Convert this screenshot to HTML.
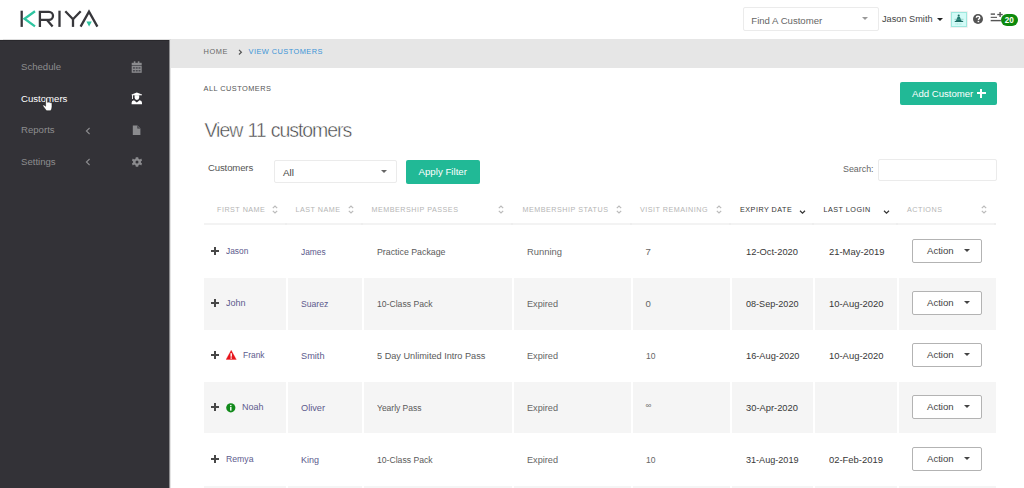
<!DOCTYPE html>
<html><head><meta charset="utf-8">
<style>
*{margin:0;padding:0;box-sizing:border-box}
html,body{width:1024px;height:488px;overflow:hidden;background:#fff;font-family:"Liberation Sans",sans-serif}
.a{position:absolute;white-space:nowrap;line-height:1}
#hdr{position:absolute;left:0;top:0;width:1024px;height:39px;background:#fff;box-shadow:0 0.5px 1px #ddd}
#side{position:absolute;left:0;top:40px;width:169px;height:448px;background:#333237;border-top:1px solid #29282c}
#bc{position:absolute;left:171px;top:39px;width:853px;height:29px;background:#e6e6e6}
.si{font-size:9.6px;color:#8d8d8f}
.cap{text-transform:uppercase}
.btn{position:absolute;background:#21b996;border-radius:2px;color:#fff}
.box{position:absolute;border:1px solid #ebebeb;border-radius:2px;background:#fff}
.th{font-size:7.2px;letter-spacing:0.5px;color:#b5b5b5}
.td{font-size:9.6px;color:#5a5a5a}
.sx{transform:scaleX(0.92);transform-origin:0 0}
.sp{transform:scaleX(0.93);transform-origin:0 0}
.sd{transform:scaleX(0.97);transform-origin:0 0}
.nm{color:#5d5b8d}
.row{position:absolute;left:204px;width:792px}
.g{background:#f5f5f5}
.sep{position:absolute;top:0;bottom:0;width:2px;background:#fff}
.plus{position:absolute;width:8px;height:8px}
.plus:before{content:"";position:absolute;left:0;top:3.1px;width:8px;height:1.8px;background:#484848}
.plus:after{content:"";position:absolute;left:3.1px;top:0;width:1.8px;height:8px;background:#484848}
.act{position:absolute;left:912px;width:70px;height:24px;border:1px solid #b3b3b3;border-radius:2px;background:#fff}
.caret{position:absolute;width:0;height:0;border-left:3px solid transparent;border-right:3px solid transparent;border-top:3px solid #555}
</style></head><body>
<div id="hdr"></div>
<!-- logo -->
<svg class="a" style="left:0;top:0" width="110" height="36" viewBox="0 0 110 36">
  <g fill="none" stroke-width="2.3" stroke-linejoin="miter">
    <line x1="21.7" y1="10.7" x2="21.7" y2="26.9" stroke="#37373b"/>
    <polyline points="35,11.2 24.5,18.8 35,26.4" stroke="#2ec4a0"/>
    <path d="M39.9,26.9 V11.85 H49 A4,4 0 0 1 49,19.85 H39.9 M46.8,19.85 L52.6,26.4" stroke="#37373b"/>
    <line x1="59.5" y1="10.7" x2="59.5" y2="26.9" stroke="#37373b"/>
    <polyline points="65.3,11.2 73,19.2 80.7,11.2" stroke="#37373b"/>
    <line x1="73" y1="19" x2="73" y2="26.9" stroke="#37373b"/>
    <polyline points="80.6,26.6 89,11.6 97.4,26.6" stroke="#37373b"/>
  </g>
  <polygon points="86.4,21.6 91.8,21.6 89.1,26.6" fill="#2ec4a0"/>
</svg>
<!-- find customer -->
<div class="box" style="left:743px;top:7px;width:136px;height:24px"></div>
<div class="a" style="left:751.3px;top:15.7px;font-size:9.6px;color:#666">Find A Customer</div>
<div class="caret" style="left:862px;top:17px;border-top-color:#999"></div>
<div class="a" style="left:882px;top:15.2px;font-size:9.2px;color:#444">Jason Smith</div>
<div class="caret" style="left:937px;top:18px;border-left-width:3px;border-right-width:3px;border-top:3.5px solid #222"></div>
<!-- avatar -->
<div class="a" style="left:950px;top:10.8px;width:17.6px;height:16.8px;background:#ededed;border-radius:1px;opacity:0.8"></div>
<div class="a" style="left:951.3px;top:11.8px;width:15.5px;height:14.8px;background:#d2fbf7;border:1px solid #9ee8de"></div>
<svg class="a" style="left:950px;top:11px" width="18" height="16" viewBox="950 11 18 16">
  <circle cx="958.7" cy="15.6" r="1.05" fill="#1f6f66"/>
  <path d="M957.6,16.8 H959.8 L961.6,21.2 H955.8z" fill="#1f7b70"/>
  <path d="M954.6,21 Q958.9,20.2 963.3,21 L963,22.1 H954.9z" fill="#1d6a62"/>
  <line x1="954.5" y1="19.3" x2="963.5" y2="19.3" stroke="#5aa79c" stroke-width="0.5"/>
  <line x1="955.5" y1="24" x2="962" y2="24" stroke="#8ccfc6" stroke-width="0.6" stroke-dasharray="1 0.6"/>
</svg>
<!-- question -->
<svg class="a" style="left:973px;top:14px" width="10" height="10" viewBox="0 0 10 10">
  <circle cx="5" cy="5" r="5" fill="#545454"/>
  <path d="M3.3,3.8 Q3.3,2.2 5,2.2 Q6.8,2.2 6.8,3.7 Q6.8,4.6 5.6,5.1 L5.5,6" stroke="#fff" stroke-width="1.4" fill="none"/>
  <rect x="4.6" y="6.8" width="1.6" height="1.4" fill="#fff"/>
</svg>
<!-- list icon -->
<svg class="a" style="left:986px;top:8px" width="20" height="16" viewBox="986 8 20 16">
  <rect x="990.7" y="13.4" width="4.3" height="1.4" fill="#555"/>
  <rect x="990.7" y="16.8" width="6.3" height="1.1" fill="#555"/>
  <rect x="990.7" y="19.9" width="10.2" height="1.4" fill="#555"/>
  <rect x="999.4" y="12" width="1.4" height="5" fill="#555"/>
  <rect x="997.3" y="13.9" width="5.4" height="1.3" fill="#555"/>
</svg>
<div class="a" style="left:1001px;top:13.9px;width:16.6px;height:12.1px;border-radius:6px;background:#0d8a0d;color:#fff;font-size:8.2px;font-weight:bold;text-align:center;line-height:13.6px">20</div>

<div id="side"></div>
<div class="a" style="left:169px;top:40px;width:1px;height:448px;background:#8e8e90"></div>
<div class="a" style="left:170px;top:40px;width:1px;height:448px;background:#e4e4e4"></div>
<div class="a si" style="left:21px;top:62.3px">Schedule</div>
<div class="a si" style="left:21px;top:93.6px;color:#fff">Customers</div>
<div class="a si" style="left:21px;top:125.1px">Reports</div>
<div class="a si" style="left:21px;top:156.6px">Settings</div>

<div id="bc"></div>
<div class="a cap" style="left:203.5px;top:48px;font-size:7.4px;letter-spacing:0.6px;color:#666">Home</div>
<div class="a cap" style="left:248.5px;top:48px;font-size:7.4px;letter-spacing:0.45px;color:#3b94d6">View Customers</div>
<div class="a cap" style="left:203.5px;top:85px;font-size:7.4px;letter-spacing:0.45px;color:#555">All Customers</div>

<div class="btn" style="left:900px;top:82px;width:97px;height:23px"></div>
<div class="a" style="left:912px;top:89px;font-size:9.6px;color:#fff">Add Customer</div>

<div class="a" style="left:204.5px;top:120.5px;font-size:19.5px;color:#444;letter-spacing:-1.05px;word-spacing:0.8px;-webkit-text-stroke:0.45px #fff">View 11 customers</div>

<div class="a" style="left:208px;top:162.5px;font-size:9.6px;letter-spacing:-0.15px;color:#555">Customers</div>
<div class="box" style="left:274px;top:160px;width:123px;height:23px"></div>
<div class="a" style="left:283px;top:168px;font-size:9.8px;color:#444">All</div>
<div class="caret" style="left:381px;top:170px;border-top-color:#666"></div>
<div class="btn" style="left:406px;top:159.7px;width:74px;height:24px"></div>
<div class="a" style="left:418.5px;top:166.8px;font-size:9.7px;color:#fff">Apply Filter</div>

<div class="a" style="left:843px;top:165px;font-size:8.9px;color:#666">Search:</div>
<div class="box" style="left:878px;top:159px;width:119px;height:22px"></div>

<!-- table header -->
<div class="a th cap" style="left:217px;top:206.2px">First name</div>
<div class="a th cap" style="left:295.5px;top:206.2px">Last name</div>
<div class="a th cap" style="left:371.5px;top:206.2px">Membership passes</div>
<div class="a th cap" style="left:522.5px;top:206.2px">Membership status</div>
<div class="a th cap" style="left:640px;top:206.2px">Visit remaining</div>
<div class="a th cap" style="left:740px;top:206.2px;color:#333">Expiry date</div>
<div class="a th cap" style="left:823.5px;top:206.2px;color:#333">Last login</div>
<div class="a th cap" style="left:907px;top:206.2px">Actions</div>

<div class="row" style="top:223px;height:2px;background:#eee"></div>

<div class="row g" style="top:278px;height:52px"></div>
<div class="row g" style="top:382px;height:51px"></div>
<div class="row g" style="top:486px;height:10px"></div>


<!-- sidebar icons -->
<svg class="a" style="left:131px;top:61px" width="12" height="13" viewBox="0 0 12 13">
  <g fill="#8b8b8e">
  <rect x="0.7" y="1.8" width="10" height="2.6"/>
  <rect x="2.8" y="0.3" width="1.6" height="2"/>
  <rect x="6.8" y="0.3" width="1.6" height="2"/>
  <rect x="0.7" y="5" width="10" height="6.8"/>
  </g>
  <g fill="#4a4a50">
  <rect x="1.9" y="6.2" width="2" height="1.5"/><rect x="4.7" y="6.2" width="2" height="1.5"/><rect x="7.5" y="6.2" width="2" height="1.5"/>
  <rect x="1.9" y="9" width="2" height="1.5"/><rect x="4.7" y="9" width="2" height="1.5"/><rect x="7.5" y="9" width="2" height="1.5"/>
  </g>
</svg>
<svg class="a" style="left:131px;top:92px" width="12" height="13" viewBox="0 0 12 13">
  <g fill="#fff">
  <path d="M0.6,2.4 L5.8,0.6 L11,2.4 L5.8,3.6z"/>
  <rect x="0.7" y="2.4" width="10.2" height="0.9"/>
  <path d="M3.6,3.2 H8.2 V5.6 A2.3,2.3 0 0 1 3.6,5.6z"/>
  <rect x="1" y="3" width="0.9" height="4"/>
  <path d="M0.6,12.2 V10.8 Q0.6,8.6 3,8.3 L5.8,10.4 L8.6,8.3 Q11,8.6 11,10.8 V12.2z"/>
  </g>
</svg>
<svg class="a" style="left:132px;top:125px" width="9" height="11" viewBox="0 0 9 11">
  <path d="M0.8,0.5 H5.6 L8.4,3.3 V10.1 H0.8z" fill="#8b8b8e"/>
  <path d="M5.6,0.5 V3.3 H8.4" fill="#55555a" stroke="#333237" stroke-width="0.5"/>
</svg>
<svg class="a" style="left:131.7px;top:156.9px" width="10" height="10" viewBox="-5 -5 10 10">
  <path fill="#8b8b8e" fill-rule="evenodd" d="M-1.2,-4.8 H1.2 L1.5,-3.3 L2.9,-2.6 L4.2,-3.4 L5.1,-1.6 L3.9,-0.6 V0.6 L5.1,1.6 L4.2,3.4 L2.9,2.6 L1.5,3.3 L1.2,4.8 H-1.2 L-1.5,3.3 L-2.9,2.6 L-4.2,3.4 L-5.1,1.6 L-3.9,0.6 V-0.6 L-5.1,-1.6 L-4.2,-3.4 L-2.9,-2.6 L-1.5,-3.3z M1.5,0 A1.5,1.5 0 1 0 -1.5,0 A1.5,1.5 0 1 0 1.5,0z"/>
</svg>
<svg class="a" style="left:84.5px;top:126.5px" width="6" height="8" viewBox="0 0 6 8"><polyline points="4.6,1 1.4,4 4.6,7" fill="none" stroke="#8b8b8e" stroke-width="1.1"/></svg>
<svg class="a" style="left:84.5px;top:158px" width="6" height="8" viewBox="0 0 6 8"><polyline points="4.6,1 1.4,4 4.6,7" fill="none" stroke="#8b8b8e" stroke-width="1.1"/></svg>
<!-- cursor -->
<svg class="a" style="left:42px;top:97px" width="12" height="15" viewBox="0 0 12 15">
  <path d="M3.6,1.5 Q3.6,0.6 4.5,0.6 Q5.4,0.6 5.4,1.5 V5.2 Q6.2,4.7 7,5.2 Q7.8,4.9 8.5,5.6 Q9.4,5.3 10,6.2 V10 Q10,12.2 8.6,13.8 H4.6 Q3.6,12.6 2.4,11 L0.9,9 Q0.6,8.2 1.4,8 Q2.2,7.9 3.6,9.2z" fill="#fff" stroke="#222" stroke-width="0.6"/>
</svg>
<!-- breadcrumb chevron -->
<svg class="a" style="left:237.5px;top:49px" width="5" height="6" viewBox="0 0 5 6"><polyline points="1,0.9 3.4,3.2 1,5.5" fill="none" stroke="#555" stroke-width="1.2"/></svg>
<!-- add customer plus -->
<div class="a" style="left:977px;top:92.3px;width:8.5px;height:2.2px;background:#fff"></div>
<div class="a" style="left:980.1px;top:89.2px;width:2.2px;height:8.5px;background:#fff"></div>
<!-- rows -->
<div class="row g" style="top:278px;height:52px"></div>
<div class="a" style="left:286px;top:278px;width:1.5px;height:52px;background:#fff"></div>
<div class="a" style="left:362px;top:278px;width:1.5px;height:52px;background:#fff"></div>
<div class="a" style="left:512px;top:278px;width:1.5px;height:52px;background:#fff"></div>
<div class="a" style="left:631px;top:278px;width:1.5px;height:52px;background:#fff"></div>
<div class="a" style="left:730px;top:278px;width:1.5px;height:52px;background:#fff"></div>
<div class="a" style="left:813px;top:278px;width:1.5px;height:52px;background:#fff"></div>
<div class="a" style="left:897px;top:278px;width:1.5px;height:52px;background:#fff"></div>
<div class="row g" style="top:382px;height:51px"></div>
<div class="a" style="left:286px;top:382px;width:1.5px;height:51px;background:#fff"></div>
<div class="a" style="left:362px;top:382px;width:1.5px;height:51px;background:#fff"></div>
<div class="a" style="left:512px;top:382px;width:1.5px;height:51px;background:#fff"></div>
<div class="a" style="left:631px;top:382px;width:1.5px;height:51px;background:#fff"></div>
<div class="a" style="left:730px;top:382px;width:1.5px;height:51px;background:#fff"></div>
<div class="a" style="left:813px;top:382px;width:1.5px;height:51px;background:#fff"></div>
<div class="a" style="left:897px;top:382px;width:1.5px;height:51px;background:#fff"></div>
<div class="row g" style="top:486px;height:14px"></div>
<div class="a" style="left:286px;top:486px;width:1.5px;height:14px;background:#fff"></div>
<div class="a" style="left:362px;top:486px;width:1.5px;height:14px;background:#fff"></div>
<div class="a" style="left:512px;top:486px;width:1.5px;height:14px;background:#fff"></div>
<div class="a" style="left:631px;top:486px;width:1.5px;height:14px;background:#fff"></div>
<div class="a" style="left:730px;top:486px;width:1.5px;height:14px;background:#fff"></div>
<div class="a" style="left:813px;top:486px;width:1.5px;height:14px;background:#fff"></div>
<div class="a" style="left:897px;top:486px;width:1.5px;height:14px;background:#fff"></div>
<div class="a" style="left:204px;top:223px;width:81px;height:2px;background:#f3f3f3"></div>
<div class="a" style="left:287px;top:223px;width:74px;height:2px;background:#f3f3f3"></div>
<div class="a" style="left:363px;top:223px;width:148px;height:2px;background:#f3f3f3"></div>
<div class="a" style="left:513px;top:223px;width:117px;height:2px;background:#f3f3f3"></div>
<div class="a" style="left:632px;top:223px;width:97px;height:2px;background:#f3f3f3"></div>
<div class="a" style="left:731px;top:223px;width:81px;height:2px;background:#f3f3f3"></div>
<div class="a" style="left:814px;top:223px;width:82px;height:2px;background:#f3f3f3"></div>
<div class="a" style="left:898px;top:223px;width:96px;height:2px;background:#f3f3f3"></div>
<div class="plus" style="left:211px;top:246.8px"></div>
<div class="a td nm" style="left:226px;top:245.6px;transform:scaleX(0.870);transform-origin:0 0;">Jason</div>
<div class="a td nm" style="left:301px;top:247.1px;transform:scaleX(0.873);transform-origin:0 0;">James</div>
<div class="a td" style="left:377px;top:247.1px;transform:scaleX(0.917);transform-origin:0 0;">Practice Package</div>
<div class="a td" style="left:527px;top:247.1px;color:#666;transform:scaleX(0.979);transform-origin:0 0;">Running</div>
<div class="a td" style="left:645.5px;top:247.1px;color:#666;">7</div>
<div class="a td" style="left:746px;top:247.1px;color:#383838;transform:scaleX(0.975);transform-origin:0 0;">12-Oct-2020</div>
<div class="a td" style="left:829px;top:247.1px;color:#383838;transform:scaleX(0.981);transform-origin:0 0;">21-May-2019</div>
<div class="act" style="top:239px"></div>
<div class="a" style="left:927px;top:246.3px;font-size:9.6px;color:#444">Action</div>
<div class="caret" style="left:964px;top:249.3px;border-top-color:#444"></div>
<div class="plus" style="left:211px;top:298.8px"></div>
<div class="a td nm" style="left:226px;top:297.6px;transform:scaleX(0.941);transform-origin:0 0;">John</div>
<div class="a td nm" style="left:301px;top:299.1px;transform:scaleX(0.897);transform-origin:0 0;">Suarez</div>
<div class="a td" style="left:377px;top:299.1px;transform:scaleX(0.898);transform-origin:0 0;">10-Class Pack</div>
<div class="a td" style="left:527px;top:299.1px;color:#666;transform:scaleX(0.952);transform-origin:0 0;">Expired</div>
<div class="a td" style="left:645.5px;top:299.1px;color:#666;">0</div>
<div class="a td" style="left:746px;top:299.1px;color:#383838;transform:scaleX(0.946);transform-origin:0 0;">08-Sep-2020</div>
<div class="a td" style="left:829px;top:299.1px;color:#383838;transform:scaleX(0.982);transform-origin:0 0;">10-Aug-2020</div>
<div class="act" style="top:291px"></div>
<div class="a" style="left:927px;top:298.3px;font-size:9.6px;color:#444">Action</div>
<div class="caret" style="left:964px;top:301.3px;border-top-color:#444"></div>
<div class="plus" style="left:211px;top:350.8px"></div>
<svg class="a" style="left:226px;top:350.2px" width="11" height="10" viewBox="0 0 11 10"><path d="M5.2,0.3 L10.3,9.5 H0.1z" fill="#e8141b" stroke="#e8141b" stroke-width="0.3" stroke-linejoin="round"/><rect x="4.5" y="3.2" width="1.4" height="3.5" fill="#fff"/><rect x="4.5" y="7.4" width="1.4" height="1.3" fill="#fff"/></svg>
<div class="a td nm" style="left:243px;top:349.6px;transform:scaleX(0.879);transform-origin:0 0;">Frank</div>
<div class="a td nm" style="left:301px;top:351.1px;transform:scaleX(0.958);transform-origin:0 0;">Smith</div>
<div class="a td" style="left:377px;top:351.1px;transform:scaleX(0.954);transform-origin:0 0;">5 Day Unlimited Intro Pass</div>
<div class="a td" style="left:527px;top:351.1px;color:#666;transform:scaleX(0.952);transform-origin:0 0;">Expired</div>
<div class="a td" style="left:645.5px;top:351.1px;color:#666;transform:scaleX(0.890);transform-origin:0 0;">10</div>
<div class="a td" style="left:746px;top:351.1px;color:#383838;transform:scaleX(0.964);transform-origin:0 0;">16-Aug-2020</div>
<div class="a td" style="left:829px;top:351.1px;color:#383838;transform:scaleX(0.982);transform-origin:0 0;">10-Aug-2020</div>
<div class="act" style="top:343px"></div>
<div class="a" style="left:927px;top:350.3px;font-size:9.6px;color:#444">Action</div>
<div class="caret" style="left:964px;top:353.3px;border-top-color:#444"></div>
<div class="plus" style="left:211px;top:402.8px"></div>
<svg class="a" style="left:226px;top:403.0px" width="10" height="10" viewBox="0 0 10 10"><circle cx="4.8" cy="4.8" r="4.6" fill="#128a1b"/><rect x="4.1" y="4" width="1.4" height="3.6" fill="#fff"/><rect x="4.1" y="1.9" width="1.4" height="1.3" fill="#fff"/></svg>
<div class="a td nm" style="left:241.8px;top:401.6px;transform:scaleX(0.937);transform-origin:0 0;">Noah</div>
<div class="a td nm" style="left:301px;top:403.1px;transform:scaleX(0.957);transform-origin:0 0;">Oliver</div>
<div class="a td" style="left:377px;top:403.1px;transform:scaleX(0.884);transform-origin:0 0;">Yearly Pass</div>
<div class="a td" style="left:527px;top:403.1px;color:#666;transform:scaleX(0.952);transform-origin:0 0;">Expired</div>
<div class="a td" style="left:645.5px;top:401.6px;color:#666;font-size:8px">∞</div>
<div class="a td" style="left:746px;top:403.1px;color:#383838;transform:scaleX(0.974);transform-origin:0 0;">30-Apr-2020</div>
<div class="act" style="top:395px"></div>
<div class="a" style="left:927px;top:402.3px;font-size:9.6px;color:#444">Action</div>
<div class="caret" style="left:964px;top:405.3px;border-top-color:#444"></div>
<div class="plus" style="left:211px;top:454.8px"></div>
<div class="a td nm" style="left:226px;top:453.6px;transform:scaleX(0.904);transform-origin:0 0;">Remya</div>
<div class="a td nm" style="left:301px;top:455.1px;transform:scaleX(0.937);transform-origin:0 0;">King</div>
<div class="a td" style="left:377px;top:455.1px;transform:scaleX(0.898);transform-origin:0 0;">10-Class Pack</div>
<div class="a td" style="left:527px;top:455.1px;color:#666;transform:scaleX(0.952);transform-origin:0 0;">Expired</div>
<div class="a td" style="left:645.5px;top:455.1px;color:#666;transform:scaleX(0.890);transform-origin:0 0;">10</div>
<div class="a td" style="left:746px;top:455.1px;color:#383838;transform:scaleX(0.946);transform-origin:0 0;">31-Aug-2019</div>
<div class="a td" style="left:829px;top:455.1px;color:#383838;transform:scaleX(0.982);transform-origin:0 0;">02-Feb-2019</div>
<div class="act" style="top:447px"></div>
<div class="a" style="left:927px;top:454.3px;font-size:9.6px;color:#444">Action</div>
<div class="caret" style="left:964px;top:457.3px;border-top-color:#444"></div>
<svg class="a" style="left:271.5px;top:205px" width="6" height="9" viewBox="0 0 6 9"><polyline points="0.8,3.2 3,1 5.2,3.2" fill="none" stroke="#bbb" stroke-width="1.2"/><polyline points="0.8,5.8 3,8 5.2,5.8" fill="none" stroke="#bbb" stroke-width="1.2"/></svg>
<svg class="a" style="left:347.5px;top:205px" width="6" height="9" viewBox="0 0 6 9"><polyline points="0.8,3.2 3,1 5.2,3.2" fill="none" stroke="#bbb" stroke-width="1.2"/><polyline points="0.8,5.8 3,8 5.2,5.8" fill="none" stroke="#bbb" stroke-width="1.2"/></svg>
<svg class="a" style="left:498px;top:205px" width="6" height="9" viewBox="0 0 6 9"><polyline points="0.8,3.2 3,1 5.2,3.2" fill="none" stroke="#bbb" stroke-width="1.2"/><polyline points="0.8,5.8 3,8 5.2,5.8" fill="none" stroke="#bbb" stroke-width="1.2"/></svg>
<svg class="a" style="left:615.7px;top:205px" width="6" height="9" viewBox="0 0 6 9"><polyline points="0.8,3.2 3,1 5.2,3.2" fill="none" stroke="#bbb" stroke-width="1.2"/><polyline points="0.8,5.8 3,8 5.2,5.8" fill="none" stroke="#bbb" stroke-width="1.2"/></svg>
<svg class="a" style="left:716px;top:205px" width="6" height="9" viewBox="0 0 6 9"><polyline points="0.8,3.2 3,1 5.2,3.2" fill="none" stroke="#bbb" stroke-width="1.2"/><polyline points="0.8,5.8 3,8 5.2,5.8" fill="none" stroke="#bbb" stroke-width="1.2"/></svg>
<svg class="a" style="left:980.5px;top:205px" width="6" height="9" viewBox="0 0 6 9"><polyline points="0.8,3.2 3,1 5.2,3.2" fill="none" stroke="#bbb" stroke-width="1.2"/><polyline points="0.8,5.8 3,8 5.2,5.8" fill="none" stroke="#bbb" stroke-width="1.2"/></svg>
<svg class="a" style="left:799px;top:208.5px" width="7" height="6" viewBox="0 0 7 6"><polyline points="1,1.8 3.5,4.2 6,1.8" fill="none" stroke="#333" stroke-width="1.2"/></svg>
<svg class="a" style="left:882.5px;top:208.5px" width="7" height="6" viewBox="0 0 7 6"><polyline points="1,1.8 3.5,4.2 6,1.8" fill="none" stroke="#333" stroke-width="1.2"/></svg>
</body></html>
